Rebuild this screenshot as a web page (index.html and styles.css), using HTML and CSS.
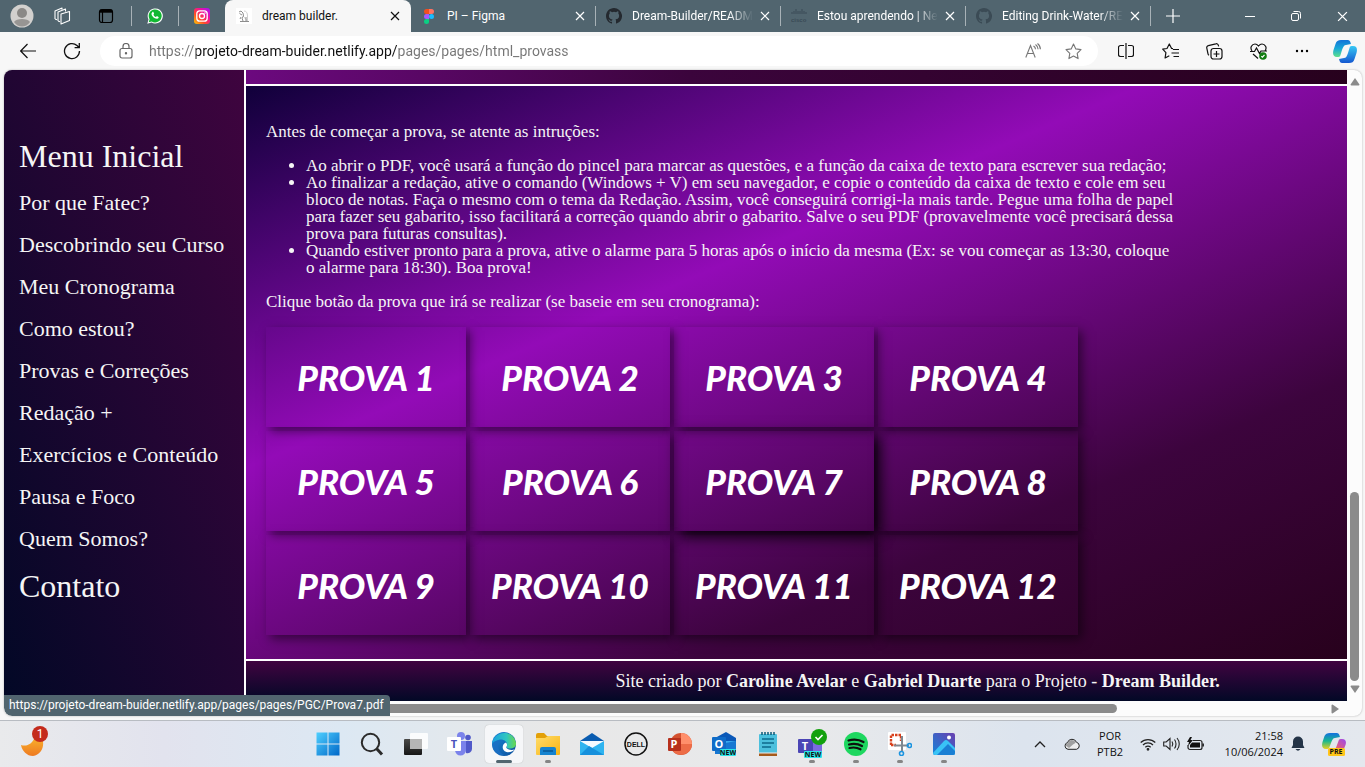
FILE: index.html
```html
<!DOCTYPE html>
<html lang="pt-BR">
<head>
<meta charset="utf-8">
<meta name="viewport" content="width=device-width, initial-scale=1">
<title>dream builder.</title>
<link rel="stylesheet" href="styles.css">
</head>
<body>
<svg class="defs" aria-hidden="true">
  <defs>
    <linearGradient id="gIg" x1="0" y1="1" x2="1" y2="0"><stop offset="0" stop-color="#ffc800"/><stop offset=".35" stop-color="#ff4b2b"/><stop offset=".65" stop-color="#f0109b"/><stop offset="1" stop-color="#a010ff"/></linearGradient>
    <linearGradient id="gWin" x1="0" y1="0" x2="1" y2="1"><stop offset="0" stop-color="#4fd0ff"/><stop offset="1" stop-color="#0067c8"/></linearGradient>
    <linearGradient id="gEdgeA" x1="0" y1="0" x2="1" y2="0"><stop offset="0" stop-color="#1a9fe0"/><stop offset=".6" stop-color="#2fc6c0"/><stop offset="1" stop-color="#6ad84a"/></linearGradient>
    <linearGradient id="gEdgeB" x1="0" y1="0" x2="1" y2="1"><stop offset="0" stop-color="#1b88d8"/><stop offset="1" stop-color="#0c4f9c"/></linearGradient>
    <linearGradient id="gMoon" x1="0" y1="0" x2="0" y2="1"><stop offset="0" stop-color="#f9b52c"/><stop offset="1" stop-color="#ee7a22"/></linearGradient>
    <linearGradient id="gCopA" x1="0" y1="0" x2="0" y2="1"><stop offset="0" stop-color="#1273d8"/><stop offset=".5" stop-color="#18a8d8"/><stop offset="1" stop-color="#5ee08a"/></linearGradient>
    <linearGradient id="gCopB" x1="0" y1="0" x2="0" y2="1"><stop offset="0" stop-color="#36c8f4"/><stop offset="1" stop-color="#1457d0"/></linearGradient>
    <linearGradient id="gPreA" x1="0" y1="0" x2="0" y2="1"><stop offset="0" stop-color="#1470e0"/><stop offset=".5" stop-color="#18b890"/><stop offset="1" stop-color="#e8d020"/></linearGradient>
    <linearGradient id="gPreB" x1="1" y1="0" x2="0" y2="1"><stop offset="0" stop-color="#9a48f0"/><stop offset="1" stop-color="#ff6a50"/></linearGradient>
    <linearGradient id="gTask" x1="0" y1="0" x2="0" y2="1"><stop offset="0" stop-color="#4a4a48"/><stop offset="1" stop-color="#161616"/></linearGradient>
    <linearGradient id="gFolder" x1="0" y1="0" x2="1" y2="1"><stop offset="0" stop-color="#ffdc6a"/><stop offset="1" stop-color="#f8b414"/></linearGradient>
    <linearGradient id="gPhoto" x1="0" y1="1" x2="1" y2="0"><stop offset="0" stop-color="#1583d8"/><stop offset="1" stop-color="#6a3fb0"/></linearGradient>
    <symbol id="close" viewBox="0 0 10 10"><path d="M1 1l8 8M9 1l-8 8" fill="none" stroke="currentColor" stroke-width="1.2"/></symbol>
    <symbol id="github" viewBox="0 0 16 16"><path fill="currentColor" d="M8 0C3.58 0 0 3.58 0 8c0 3.54 2.29 6.53 5.47 7.59.4.07.55-.17.55-.38v-1.49c-2.23.48-2.7-.94-2.7-.94-.36-.92-.89-1.17-.89-1.17-.72-.49.06-.48.06-.48.8.06 1.22.82 1.22.82.72 1.23 1.88.87 2.34.67.07-.52.28-.88.51-1.08-1.78-.2-3.64-.89-3.64-3.95 0-.87.31-1.59.82-2.15-.08-.2-.36-1.02.08-2.12 0 0 .67-.21 2.2.82a7.6 7.6 0 0 1 4 0c1.53-1.04 2.2-.82 2.2-.82.44 1.1.16 1.92.08 2.12.51.56.82 1.27.82 2.15 0 3.07-1.87 3.75-3.65 3.95.29.25.54.73.54 1.48v2.19c0 .21.15.46.55.38A8 8 0 0 0 8 0z"/></symbol>
  </defs>
</svg>

<header class="tabbar">
  <button class="slot slot-profile" aria-label="Perfil">
    <svg width="24" height="24" viewBox="0 0 24 24"><circle cx="12" cy="12" r="11.5" fill="#d2d0ce"/><circle cx="12" cy="9" r="5" fill="#8a8886"/><path d="M4 18c2-4 14-4 16 0-4 6-12 6-16 0z" fill="#979593"/></svg>
  </button>
  <button class="slot slot-spaces" aria-label="Workspaces">
    <svg width="18" height="18" viewBox="0 0 18 18" fill="none" stroke="#fff" stroke-width="1.1" stroke-linejoin="round"><path d="M8 7l8.500-2.500v9L8 17z"/><path d="M5 14V5l7.500-3v2.500M5 14l2 .7"/><path d="M2 12V4L9 1v1.800M2 12l2 .7"/></svg>
  </button>
  <button class="slot slot-actions" aria-label="Menu de guias">
    <svg width="16" height="16" viewBox="0 0 16 16" fill="none" stroke="#000" stroke-width="1.2"><rect x="1.5" y="1.5" width="13" height="13" rx="2.5"/><path d="M2 3.2h12" stroke-width="3"/><path d="M4.500 4v10"/></svg>
  </button>
  <button class="slot slot-pinned" aria-label="WhatsApp">
    <svg width="16" height="16" viewBox="0 0 16 16"><path d="M.3 15.700l1.200-4.200A7.600 7.600 0 1 1 4.500 14.600z" fill="#fff"/><path d="M1.700 14.300l.9-3A6.500 6.500 0 1 1 4.800 13.500z" fill="#12b833"/><path d="M5.300 4.200c.5-.5 1-.4 1.200.1l.6 1.400-.7 1c.6 1.200 1.400 1.900 2.600 2.400l.9-1 1.600.8c.4.2 0 1.300-.7 1.700C8.500 11.800 4 8 4.500 5.600z" fill="#fff"/></svg>
  </button>
  <button class="slot slot-pinned" aria-label="Instagram">
    <svg width="16" height="16" viewBox="0 0 16 16"><rect width="16" height="16" rx="3" fill="url(#gIg)"/><g fill="none" stroke="#fff" stroke-width="1.3"><rect x="2.800" y="2.800" width="10.400" height="10.400" rx="3"/><circle cx="8" cy="8" r="2.500"/></g><circle cx="11" cy="5" r=".8" fill="#fff"/></svg>
  </button>
  <div class="tab tab-active">
    <svg class="tab-icon" width="16" height="16" viewBox="0 0 16 16"><rect width="16" height="16" fill="#fff"/><path d="M8 3c2.500 0 3.500 2 3.500 5v5M7 8c1 2 3 2 4 5" fill="none" stroke="#cfcfcf"/><path d="M3 4l2-1 2 2 .5 3L6 10l1 3M3.500 5.500L6 7M5 9l-1 2M4 13.500h9M10 9v4" fill="none" stroke="#808080" stroke-width=".9"/></svg>
    <span class="tab-title">dream builder.</span>
    <button class="tab-close" aria-label="Fechar guia"><svg width="10" height="10"><use href="#close"/></svg></button>
  </div>
  <div class="tab">
    <svg class="tab-icon" width="16" height="16" viewBox="0 0 16 16"><path d="M5.500 1H8v5H5.500a2.500 2.500 0 0 1 0-5z" fill="#f24e1e"/><path d="M8 1h2.500a2.500 2.500 0 0 1 0 5H8z" fill="#ff7262"/><path d="M5.500 6H8v5H5.500a2.500 2.500 0 0 1 0-5z" fill="#a259ff"/><circle cx="10.500" cy="8.500" r="2.500" fill="#1abcfe"/><path d="M5.500 11H8v2.500A2.500 2.500 0 1 1 5.500 11z" fill="#0acf83"/></svg>
    <span class="tab-title">PI – Figma</span>
    <button class="tab-close" aria-label="Fechar guia"><svg width="10" height="10"><use href="#close"/></svg></button>
  </div>
  <div class="tab">
    <svg class="tab-icon icon-dark" width="16" height="16"><use href="#github"/></svg>
    <span class="tab-title tab-title-fade">Dream-Builder/READM</span>
    <button class="tab-close" aria-label="Fechar guia"><svg width="10" height="10"><use href="#close"/></svg></button>
  </div>
  <div class="tab">
    <svg class="tab-icon" width="16" height="16" viewBox="0 0 16 16"><path d="M1 4v2M3 3v3M5 1v5M7 3v3M9 3v3M11 1v5M13 3v3M15 4v2" stroke="#3a4b56" stroke-width="1"/><text x="0" y="14" class="cisco">cisco</text></svg>
    <span class="tab-title tab-title-fade">Estou aprendendo | Ne</span>
    <button class="tab-close" aria-label="Fechar guia"><svg width="10" height="10"><use href="#close"/></svg></button>
  </div>
  <div class="tab">
    <svg class="tab-icon icon-dim" width="16" height="16"><use href="#github"/></svg>
    <span class="tab-title tab-title-fade">Editing Drink-Water/RE</span>
    <button class="tab-close" aria-label="Fechar guia"><svg width="10" height="10"><use href="#close"/></svg></button>
  </div>
  <button class="new-tab" aria-label="Nova guia"><svg width="14" height="14" viewBox="0 0 14 14"><path d="M7 0v14M0 7h14" stroke="#fff" stroke-width="1.2"/></svg></button>
  <div class="window-buttons">
    <button aria-label="Minimizar"><svg width="10" height="10" viewBox="0 0 10 10"><path d="M0 5.500h10" stroke="#fff"/></svg></button>
    <button aria-label="Restaurar"><svg width="10" height="10" viewBox="0 0 10 10" fill="none" stroke="#fff"><rect x=".5" y="2.500" width="7" height="7" rx="1.500"/><path d="M2.500.500h5a2 2 0 0 1 2 2v5"/></svg></button>
    <button aria-label="Fechar"><svg width="11" height="11"><use href="#close"/></svg></button>
  </div>
</header>

<div class="toolbar">
  <button class="tool" aria-label="Voltar"><svg width="16" height="16" viewBox="0 0 16 16" fill="none" stroke="#111" stroke-width="1.2"><path d="M16 8H.8M7.500 1L.7 8l6.800 7"/></svg></button>
  <button class="tool" aria-label="Atualizar"><svg width="18" height="18" viewBox="0 0 18 18" fill="none" stroke="#111" stroke-width="1.3"><path d="M16.500 9A7.500 7.500 0 1 1 14 3.500l2 2M16.300 1v4.700h-4.700"/></svg></button>
  <form class="address">
    <svg width="14" height="16" viewBox="0 0 14 16" fill="none" stroke="#666" stroke-width="1.2"><rect x="1" y="5.500" width="12" height="9.500" rx="2"/><path d="M4 5.500V3.500a3 3 0 0 1 6 0v2"/><circle cx="7" cy="10.300" r=".6" fill="#666"/></svg>
    <input class="address-input" aria-label="Endereço" value="https://projeto-dream-buider.netlify.app/pages/pages/html_provass">
    <button class="address-button" type="button" aria-label="Ler em voz alta"><svg width="16" height="16" viewBox="0 0 16 16" fill="none" stroke="#777" stroke-width="1.1"><path d="M.8 14.500L5.500 2.500l4.700 12M2.500 10.500h6M8.500 3c1.300.8 2 1.800 2 3.200M10.500 1.500c1.700 1.200 2.600 2.700 2.600 4.800M12.500.5c2 1.500 2.900 3.300 2.900 5.800"/></svg></button>
    <button class="address-button" type="button" aria-label="Favoritar"><svg width="17" height="17" viewBox="0 0 17 17" fill="none" stroke="#777" stroke-width="1.1" stroke-linejoin="round"><path d="M8.500 1l2.300 4.900 5.200.7-3.800 3.700.9 5.300-4.600-2.500-4.600 2.500.9-5.300L1 6.600l5.200-.7z"/></svg></button>
  </form>
  <button class="tool" aria-label="Dividir tela"><svg width="16" height="16" viewBox="0 0 16 16" fill="none" stroke="#111" stroke-width="1.2"><path d="M8 0v16M6 2.500H2.500a2 2 0 0 0-2 2v7a2 2 0 0 0 2 2H6M10 2.500h3.500a2 2 0 0 1 2 2v7a2 2 0 0 1-2 2H10"/></svg></button>
  <button class="tool" aria-label="Favoritos"><svg width="17" height="17" viewBox="0 0 17 17" fill="none" stroke="#111" stroke-width="1.2" stroke-linejoin="round"><path d="M11 5.700l-1.400-.2L7.300 1 5 5.500.7 6.200l3.200 3.500-.8 5.300 4.200-2.200M11 6.500h6M9.500 10H17M11.500 13.500H17"/></svg></button>
  <button class="tool" aria-label="Coleções"><svg width="17" height="17" viewBox="0 0 17 17" fill="none" stroke="#111" stroke-width="1.2"><rect x="5" y="5.500" width="11" height="10.500" rx="2.500"/><path d="M10.500 8v6M7.500 11h6M3 12.300a2.500 2.500 0 0 1-1-1.500L.8 5.200a2 2 0 0 1 1.500-2.500l7.500-1.900a2 2 0 0 1 2.500 1.400l.3 1.200"/></svg></button>
  <button class="tool" aria-label="Desempenho"><svg width="17" height="17" viewBox="0 0 17 17" fill="none" stroke="#111" stroke-width="1.2"><path d="M2 8C-.5 4.500 2 1 5 1c1.600 0 2.700 1 3.500 2 .8-1 1.900-2 3.500-2 3 0 5.500 3.500 3 7M0 8.500h4.500L6.500 5l3 5.500L11 8h6M3 11l5 4.500"/><circle cx="13" cy="13" r="3.800" fill="#107c10" stroke="none"/><path d="M11.300 13.200l1.200 1 2-2.300" stroke="#fff"/></svg></button>
  <button class="tool" aria-label="Mais"><svg width="14" height="4" viewBox="0 0 14 4"><circle cx="2" cy="2" r="1.200"/><circle cx="7" cy="2" r="1.200"/><circle cx="12" cy="2" r="1.200"/></svg></button>
  <button class="tool tool-copilot" aria-label="Copilot"><svg width="24" height="23" viewBox="0 0 24 23"><path d="M8 0h6c3 0 3 1 4 4l-5 1c-2 0-3 2-4 5l-1.500 5C7 17 6 17 4 17 0 17-.5 14 .5 10l2-6C3.500 1 5 0 8 0z" fill="url(#gCopA)"/><path d="M16 23h-6c-3 0-3-1-4-4l5-1c2 0 3-2 4-5l1.500-5c.5-2 1.500-2 3.500-2 4 0 4.500 3 3.500 7l-2 6c-1 3-2.500 4-5.500 4z" fill="url(#gCopB)"/></svg></button>
</div>

<div class="viewport">
  <nav class="sidebar">
    <a class="menu-title" href="#">Menu Inicial</a>
    <a href="#">Por que Fatec?</a>
    <a href="#">Descobrindo seu Curso</a>
    <a href="#">Meu Cronograma</a>
    <a href="#">Como estou?</a>
    <a href="#">Provas e Correções</a>
    <a href="#">Redação +</a>
    <a href="#">Exercícios e Conteúdo</a>
    <a href="#">Pausa e Foco</a>
    <a href="#">Quem Somos?</a>
    <a class="menu-title" href="#">Contato</a>
  </nav>
  <main class="page">
    <div class="page-inner">
      <div class="previous"></div>
      <section class="exams">
        <p>Antes de começar a prova, se atente as intruções:</p>
        <ul>
          <li>Ao abrir o PDF, você usará a função do pincel para marcar as questões, e a função da caixa de texto para escrever sua redação;</li>
          <li>Ao finalizar a redação, ative o comando (Windows + V) em seu navegador, e copie o conteúdo da caixa de texto e cole em seu<br>bloco de notas. Faça o mesmo com o tema da Redação. Assim, você conseguirá corrigi-la mais tarde. Pegue uma folha de papel<br>para fazer seu gabarito, isso facilitará a correção quando abrir o gabarito. Salve o seu PDF (provavelmente você precisará dessa<br>prova para futuras consultas).</li>
          <li>Quando estiver pronto para a prova, ative o alarme para 5 horas após o início da mesma (Ex: se vou começar as 13:30, coloque<br>o alarme para 18:30). Boa prova!</li>
        </ul>
        <p>Clique botão da prova que irá se realizar (se baseie em seu cronograma):</p>
        <div class="cards">
          <a class="card" href="#">PROVA 1</a>
          <a class="card" href="#">PROVA 2</a>
          <a class="card" href="#">PROVA 3</a>
          <a class="card" href="#">PROVA 4</a>
          <a class="card" href="#">PROVA 5</a>
          <a class="card" href="#">PROVA 6</a>
          <a class="card card-hover" href="#">PROVA 7</a>
          <a class="card" href="#">PROVA 8</a>
          <a class="card" href="#">PROVA 9</a>
          <a class="card" href="#">PROVA 10</a>
          <a class="card" href="#">PROVA 11</a>
          <a class="card" href="#">PROVA 12</a>
        </div>
      </section>
      <footer class="credits"><p>Site criado por <strong>Caroline Avelar</strong> e <strong>Gabriel Duarte</strong> para o Projeto - <strong>Dream Builder.</strong></p></footer>
    </div>
  </main>
  <div class="vscroll">
    <svg width="10" height="8" viewBox="0 0 10 8"><path d="M5 0l4.500 6.500q0 1-1 1h-7q-1 0-1-1z" fill="#8b8b8b"/></svg>
    <div class="vtrack"><div class="vthumb"></div></div>
    <svg width="10" height="8" viewBox="0 0 10 8"><path d="M5 8L.5 1.500q0-1 1-1h7q1 0 1 1z" fill="#8b8b8b"/></svg>
  </div>
  <div class="hscroll">
    <div class="htrack"><div class="hthumb"></div></div>
    <svg width="8" height="10" viewBox="0 0 8 10"><path d="M8 5L1.500 9.500q-1 0-1-1v-7q0-1 1-1z" fill="#8b8b8b"/></svg>
  </div>
  <div class="status">https://projeto-dream-buider.netlify.app/pages/pages/PGC/Prova7.pdf</div>
</div>

<div class="taskbar">
  <div class="widgets">
    <button class="weather" aria-label="Clima"><svg width="24" height="24" viewBox="0 0 24 24"><path d="M0 13c6 2 11-1 14-8l6-1c5 8 1 19-8 20C6 24 1 19 0 13z" fill="url(#gMoon)"/></svg><span class="badge">1</span></button>
  </div>
  <div class="apps">
    <button class="app" aria-label="Iniciar"><svg width="24" height="24" viewBox="0 0 24 24"><path d="M.5.500h11v11H.5zM12.500.500h11v11h-11zM.5 12.500h11v11H.5zM12.500 12.500h11v11h-11z" fill="url(#gWin)"/></svg></button>
    <button class="app" aria-label="Pesquisar"><svg width="24" height="24" viewBox="0 0 24 24" fill="none" stroke="#2b2b2b"><circle cx="10.500" cy="10.500" r="8.700" stroke-width="2"/><path d="M16.500 16.500l5.500 6" stroke-width="3"/></svg></button>
    <button class="app" aria-label="Visão de tarefas"><svg width="24" height="24" viewBox="0 0 24 24"><rect x="0" y="7" width="18" height="16" rx="1" fill="url(#gTask)"/><rect x="6" y="1" width="18" height="16" rx="1" fill="#fff" opacity=".85"/><rect x="6" y="7" width="12" height="10" fill="#b5b5b5"/></svg></button>
    <button class="app" aria-label="Teams"><svg width="26" height="24" viewBox="0 0 26 24"><circle cx="14" cy="4" r="4" fill="#7b83eb"/><circle cx="21" cy="5.500" r="2.800" fill="#5059c9"/><path d="M17 9h8v8a4.500 4.500 0 0 1-6 4z" fill="#5059c9"/><path d="M8 9h11v9a5.500 5.500 0 0 1-11 0z" fill="#7b83eb"/><rect x="0" y="5" width="14" height="14" rx="1" fill="#fff"/><text x="7" y="16" text-anchor="middle" class="glyph glyph-violet">T</text></svg></button>
    <button class="app app-active" aria-label="Edge"><svg width="24" height="24" viewBox="0 0 24 24"><circle cx="12" cy="12" r="12" fill="url(#gEdgeB)"/><path d="M0 12C1-1 21-4 24 11c.5 4-3 6-7 5.500-2.500-.5-3-1.500-2-3C16 10 12 7 8 7.500 4 8 1 10 0 12z" fill="url(#gEdgeA)"/><path d="M14 10.500c-4 1-5 8 .5 9.500 3 .8 6-.3 8-2.500-3 1-7 0-8-1.500-.7-1 .8-2 .5-3.500-.1-.8-.4-1.500-1-2z" fill="#fff"/><path d="M9 8.500c-4 3-4 11 3 14.500C4 24 0 17 .3 12 2 9 6 8 9 8.500z" fill="#1c6fc4" opacity=".8"/></svg></button>
    <button class="app app-open" aria-label="Explorador"><svg width="24" height="24" viewBox="0 0 24 24"><path d="M0 3q0-2 2-2h6l3 3h11q2 0 2 2v16H0z" fill="#e3a008"/><path d="M0 6h9l3-2h12v18q0 1-1 1H1q-1 0-1-1z" fill="url(#gFolder)"/><path d="M4 23v-6q0-2 2-2h12q2 0 2 2v6z" fill="#1583cf"/><path d="M7 18h10v2H7z" fill="#0b62a4"/></svg></button>
    <button class="app" aria-label="Email"><svg width="24" height="24" viewBox="0 0 24 24"><path d="M0 9L12 1l12 8z" fill="#0a5cb0"/><path d="M0 9h24L12 19z" fill="#f4faff"/><path d="M0 9l12 7L24 9v14H0z" fill="#2fb4f0"/><path d="M3 9h18l-9 6z" fill="#f4faff"/><path d="M0 23h24L9 14z" fill="#1690dc"/></svg></button>
    <button class="app" aria-label="Dell"><svg width="24" height="24" viewBox="0 0 24 24"><circle cx="12" cy="12" r="11" fill="none" stroke="#111" stroke-width="1.5"/><text x="12" y="15" text-anchor="middle" class="dell">DELL</text></svg></button>
    <button class="app" aria-label="PowerPoint"><svg width="24" height="22" viewBox="0 0 24 22"><circle cx="13" cy="11" r="11" fill="#d35230"/><path d="M13 0a11 11 0 0 1 11 11H13z" fill="#ff8f6b"/><path d="M2.500 14L13 11h11a11 11 0 0 1-20 6z" fill="#ed6c47"/><rect x="0" y="5" width="13" height="13" rx="1" fill="#b7301c"/><text x="6" y="15" text-anchor="middle" class="glyph">P</text></svg></button>
    <button class="app" aria-label="Outlook"><svg width="24" height="24" viewBox="0 0 24 24"><path d="M3 6L14 0l10 6v16H3z" fill="#0a58b8"/><path d="M10 9h14l-14 9z" fill="#39a9ee"/><path d="M3 13l21-4v13H3z" fill="#1677d2"/><rect x="0" y="5" width="14" height="14" rx="1" fill="#0f6cc8"/><text x="7" y="16" text-anchor="middle" class="glyph">O</text><rect x="8" y="17" width="16" height="7" rx="1" fill="#29e4e8"/><text x="16" y="23" text-anchor="middle" class="new">NEW</text></svg></button>
    <button class="app" aria-label="Bloco de notas"><svg width="20" height="24" viewBox="0 0 20 24"><path d="M1 20h18v4H1z" fill="#a55a1c"/><rect x="1" y="2" width="18" height="19" rx="1" fill="#4cc0dd"/><path d="M1 21h18" stroke="#eee" stroke-width="1"/><path d="M4 0v3M7 0v3M10 0v3M13 0v3M16 0v3" stroke="#0b5a78" stroke-width="1.5"/><path d="M4 7h12M4 11h12M4 15h9" stroke="#0d6a8c" stroke-width="1.5"/></svg></button>
    <button class="app app-open" aria-label="Teams novo"><svg width="30" height="30" viewBox="0 0 30 30"><path d="M12 10h13v15H12z" fill="#7b6be0"/><rect x="1" y="10" width="15" height="14" rx="1" fill="#4b45b5"/><text x="8" y="21" text-anchor="middle" class="glyph">T</text><rect x="7" y="22" width="18" height="7" rx="1" fill="#29e4e8"/><text x="16" y="28" text-anchor="middle" class="new">NEW</text><circle cx="22" cy="8" r="8" fill="#13a10e"/><path d="M18.500 8l2.500 2.500 4.500-4.500" fill="none" stroke="#fff" stroke-width="1.6"/></svg></button>
    <button class="app app-open" aria-label="Spotify"><svg width="24" height="24" viewBox="0 0 24 24"><circle cx="12" cy="12" r="12" fill="#1ed760"/><path d="M4.500 8.500c5-1.500 10.500-1 15 1.500M5 12.500c4.500-1.300 9-.8 13 1.500M5.500 16c4-1 7.500-.6 11 1.300" fill="none" stroke="#0c120e" stroke-width="2.2" stroke-linecap="round"/></svg></button>
    <button class="app app-open" aria-label="Ferramenta de captura"><svg width="24" height="24" viewBox="0 0 24 24"><rect x="0" y="0" width="18" height="18" rx="1" fill="#fff"/><path d="M3 13V3h10v6M3 13h5" fill="none" stroke="#d8401c" stroke-width="2.400" stroke-dasharray="2.500 1"/><path d="M14 4v15M6 13.500h15" stroke="#808890" stroke-width="2"/><circle cx="21.500" cy="13.500" r="2" fill="none" stroke="#1b94e0" stroke-width="1.6"/><circle cx="13.500" cy="21.500" r="2" fill="none" stroke="#1b94e0" stroke-width="1.6"/></svg></button>
    <button class="app app-open" aria-label="Fotos"><svg width="24" height="24" viewBox="0 0 24 24"><rect x="1" y="1" width="22" height="22" rx="2" fill="url(#gPhoto)"/><path d="M1 21L12 9q2-2 4 0l7 7v5q0 2-2 2H3q-2 0-2-2z" fill="#39c3f6"/><path d="M12 16l4-4 7 7v2q0 2-2 2H5z" fill="#1a7fd4"/><circle cx="17" cy="5.500" r="2" fill="#fff"/></svg></button>
  </div>
  <div class="tray">
    <button aria-label="Ícones ocultos" class="tray-icon"><svg width="12" height="8" viewBox="0 0 12 8"><path d="M1 7l5-5 5 5" fill="none" stroke="#222" stroke-width="1.3"/></svg></button>
    <button aria-label="OneDrive" class="tray-icon"><svg width="16" height="12" viewBox="0 0 16 12"><path d="M4 11.300a3.500 3.500 0 0 1-.5-6.800 4.800 4.800 0 0 1 9-.2 3.600 3.600 0 0 1 0 7z" fill="#eee" stroke="#222"/><path d="M1.500 7.500a3 3 0 0 1 2.300-2.600 4.300 4.300 0 0 1 8-.2L9 6.500l-4 3.500z" fill="#a0a0a0"/></svg></button>
    <button class="lang"><span>POR</span><span>PTB2</span></button>
    <button class="quick" aria-label="Configurações rápidas">
      <svg width="16" height="14" viewBox="0 0 16 14" fill="none" stroke="#222" stroke-width="1.2"><path d="M.7 5.500a10.500 10.500 0 0 1 14.600 0M3 8a7 7 0 0 1 10 0M5.300 10.300a4 4 0 0 1 5.400 0"/><circle cx="8" cy="12.300" r=".8" fill="#222"/></svg>
      <svg width="17" height="14" viewBox="0 0 17 14" fill="none" stroke="#222" stroke-width="1.1"><path d="M.7 5v4h2.500L7 12.500v-11L3.200 5zM9 4.500c1 1.500 1 3.500 0 5M11.500 2.500c2 2.500 2 6.500 0 9M14 1c3 3.500 3 8.500 0 12"/></svg>
      <svg width="17" height="14" viewBox="0 0 17 14"><path d="M6 3.500h7a2 2 0 0 1 2 2v5a2 2 0 0 1-2 2H3a2 2 0 0 1-2-2V8" fill="none" stroke="#222" stroke-width="1.2"/><path d="M5 5.500h8v5H3V8z" fill="#111"/><path d="M15.500 6.500h1.300v3h-1.300z"/><path d="M3 0L0 5h2L1 9l5-6H3.500L5 0z" fill="#111"/></svg>
    </button>
    <button class="clock"><span>21:58</span><span>10/06/2024</span></button>
    <button class="bell" aria-label="Notificações"><svg width="14" height="16" viewBox="0 0 14 16"><path d="M7 .5a5 5 0 0 1 5 5V9l1.500 3H.5L2 9V5.500a5 5 0 0 1 5-5zM4.500 13h5q-2.500 3.500-5 0z" fill="#243447"/></svg></button>
    <button class="preview" aria-label="Copilot"><svg width="24" height="24" viewBox="0 0 24 24"><path d="M8 1h6c3 0 3 1 4 4l-5 1c-2 0-3 2-4 5l-1.500 4C7 17 6 17 4 17 0 17-.5 14 .5 10l2-6C3.500 2 5 1 8 1z" fill="url(#gPreA)"/><path d="M11 18c2 0 3-2 4-5l1.500-4c.5-2 1.500-2 3.500-2 4 0 4.500 3 3.500 6l-2 5z" fill="url(#gPreB)"/><rect x="6" y="16" width="17" height="8" rx="1.500" fill="#ffc61a"/><text x="14" y="22" text-anchor="middle" class="new">PRE</text></svg></button>
  </div>
</div>
</body>
</html>
```
FILE: styles.css
```css
* { box-sizing: border-box; }

body {
  margin: 0;
  height: 100vh;
  display: flex;
  flex-direction: column;
  overflow: hidden;
  background: #f7f7f7;
  font-family: Roboto, "Open Sans", sans-serif;
  font-size: 12px;
  color: #111;
}

button {
  border: 0;
  padding: 0;
  background: none;
  font: inherit;
  color: inherit;
}

svg { display: block; flex: none; }
.defs { position: absolute; width: 0; height: 0; }

/* Tab strip */
.tabbar {
  flex: none;
  display: flex;
  height: 32px;
  background: #51656f;
  color: #fff;
}
.slot {
  flex: none;
  display: flex;
  align-items: center;
  justify-content: center;
}
.slot-profile { width: 44px; }
.slot-spaces { width: 36px; }
.slot-actions { width: 51px; }
.slot-pinned {
  width: 47px;
  background: linear-gradient(#a8b2b7, #a8b2b7) left center / 1px 20px no-repeat;
}
.tab {
  flex: 0 1 185px;
  min-width: 0;
  display: flex;
  align-items: center;
  padding: 0 8px 0 10px;
  background: linear-gradient(#a8b2b7, #a8b2b7) right center / 1px 20px no-repeat;
}
.tab-active {
  flex-basis: 186px;
  padding-left: 11px;
  background: #f7f7f7;
  color: #111;
  border-radius: 8px 8px 0 0;
}
.tab-title {
  flex: 1;
  min-width: 0;
  margin-left: 10px;
  overflow: hidden;
  white-space: nowrap;
}
.tab-title-fade { mask-image: linear-gradient(to left, transparent, #000 24px); }
.tab-close {
  flex: none;
  width: 16px;
  height: 16px;
  margin-left: 4px;
  display: grid;
  place-items: center;
}
.icon-dark { color: #24292f; }
.icon-dim { color: #3b4b55; }
.cisco { font: bold 6px "Liberation Sans", sans-serif; fill: #3a4b56; }
.new-tab { width: 44px; display: grid; place-items: center; }
.window-buttons { margin-left: auto; display: flex; }
.window-buttons button { width: 46px; display: grid; place-items: center; }

/* Toolbar */
.toolbar {
  flex: none;
  display: flex;
  height: 38px;
  padding-left: 6px;
}
.tool { flex: none; width: 44px; display: grid; place-items: center; }
.tool-copilot { width: 41px; }
.address {
  flex: 1;
  display: flex;
  align-items: center;
  height: 30px;
  margin: 4px 6px;
  padding: 0 5px 0 19px;
  background: #fff;
  border-radius: 15px;
}
.address-input {
  flex: 1;
  min-width: 0;
  margin: 0 0 0 16px;
  padding: 0;
  border: 0;
  outline: 0;
  font: 14px Roboto, "Open Sans", sans-serif;
  background: linear-gradient(to right, #757575 47px, #111 47px, #111 248px, #757575 248px);
  background-clip: text;
  -webkit-background-clip: text;
  color: transparent;
}
.address-button { width: 40px; height: 30px; display: grid; place-items: center; }

/* Browser content area */
.viewport {
  flex: 1;
  min-height: 0;
  position: relative;
  display: grid;
  grid-template-columns: 242px minmax(0, 1fr) 15px;
  grid-template-rows: minmax(0, 1fr) 15px;
  margin: 0 3px 4px 4px;
  overflow: hidden;
  background: #fcfcfc;
  border-radius: 8px;
  box-shadow: 0 0 2px #aaa;
}
.sidebar {
  display: flex;
  flex-direction: column;
  padding: 60px 15px;
  border-right: 2px solid #fff;
  background: linear-gradient(to top right, #020826, #3f043f);
  font-family: "Liberation Serif", serif;
  font-size: 22px;
  line-height: 42px;
  overflow: hidden;
}
.sidebar a { color: #f5f5f5; text-decoration: none; white-space: nowrap; }
.sidebar .menu-title { font-size: 32px; line-height: 52px; }

.page {
  overflow: hidden;
  color: #f5f5f5;
  font-family: "Liberation Serif", serif;
  font-size: 17px;
  line-height: 17px;
}
.page-inner { width: 122%; height: 100%; display: flex; flex-direction: column; }
.page p { margin: 0; }
.previous {
  flex: none;
  height: 14px;
  background: linear-gradient(to right, #6c097f, #3b043c 33%, #200012);
}
.exams {
  flex: 1;
  display: flex;
  flex-direction: column;
  gap: 17px;
  padding: 37px 20px 24px;
  border-top: 2px solid #fff;
  border-bottom: 2px solid #fff;
  background: linear-gradient(to bottom right, #10003a, #930bb7, #3c043d, #200010) padding-box;
}
.exams ul { margin: 0; padding-left: 40px; white-space: nowrap; }
.cards {
  display: grid;
  grid-template-columns: repeat(4, 200px);
  grid-auto-rows: 100px;
  gap: 4px;
}
.card {
  display: flex;
  align-items: center;
  justify-content: center;
  color: #fff;
  font: italic 900 35px/40px Lato, sans-serif;
  text-decoration: none;
  box-shadow: 4px 4px 10px rgba(0, 0, 0, .5);
}
.card-hover { box-shadow: 5px 5px 14px #000; }
.credits {
  flex: none;
  display: grid;
  place-items: center;
  height: 40px;
  font-size: 18px;
  background: linear-gradient(#400440, #020826);
}

/* Scroll bars */
.vscroll {
  display: flex;
  flex-direction: column;
  align-items: center;
  gap: 4px;
  padding: 8px 0;
}
.vtrack { flex: 1; width: 9px; display: flex; flex-direction: column; justify-content: flex-end; }
.vthumb { height: 32%; border-radius: 5px; background: #8b8b8b; }
.hscroll {
  grid-column: 1 / 3;
  display: flex;
  align-items: center;
  gap: 4px;
  padding: 0 8px 0 12px;
}
.htrack { flex: 1; }
.hthumb { width: 84%; height: 9px; border-radius: 5px; background: #8b8b8b; }
.status {
  position: absolute;
  left: 0;
  bottom: 0;
  padding: 0 6px 0 5px;
  line-height: 21px;
  background: #51656f;
  color: #fff;
  border-radius: 0 4px 0 8px;
}

/* Taskbar */
.taskbar {
  flex: none;
  display: flex;
  height: 47px;
  border-top: 1px solid #b8bcc2;
  background: linear-gradient(to right, #e9eaec, #e2e3ee 12%, #dce8f3 25%, #e8e8e8 40%, #e8e9eb 60%, #dce4ee 75%, #e4e8ee);
}
.widgets { width: 306px; display: flex; align-items: center; padding-left: 21px; }
.weather { position: relative; }
.badge {
  position: absolute;
  top: -6px;
  right: -3px;
  width: 16px;
  height: 16px;
  border-radius: 50%;
  background: #c42b1c;
  color: #fff;
  line-height: 16px;
}
.apps { display: flex; align-items: center; }
.app {
  position: relative;
  width: 38px;
  height: 38px;
  margin: 0 3px;
  display: grid;
  place-items: center;
  border-radius: 4px;
}
.app-active { background: #f6f7f9; box-shadow: 0 0 1px #aaa; }
.app-open::after,
.app-active::after {
  content: "";
  position: absolute;
  left: 16px;
  bottom: 0;
  width: 6px;
  height: 3px;
  border-radius: 2px;
  background: #858585;
}
.app-active::after { left: 11px; width: 16px; background: #51656f; }
.glyph { font: bold 11px "Open Sans", sans-serif; fill: #fff; }
.glyph-violet { fill: #4b53bc; }
.new { font: bold 7px "Open Sans", sans-serif; fill: #111; }
.dell { font: bold 7px "Liberation Sans", sans-serif; fill: #111; }
.tray {
  margin-left: auto;
  display: flex;
  align-items: center;
  padding-right: 19px;
  font-family: "Open Sans", sans-serif;
  font-size: 11px;
  line-height: 16px;
}
.tray-icon { width: 32px; display: grid; place-items: center; }
.lang { width: 44px; display: grid; justify-items: center; }
.quick { display: flex; align-items: center; gap: 7px; margin-left: 8px; }
.clock { width: 79px; display: grid; justify-items: end; }
.bell { margin-left: 8px; }
.preview { margin-left: 17px; }
```
